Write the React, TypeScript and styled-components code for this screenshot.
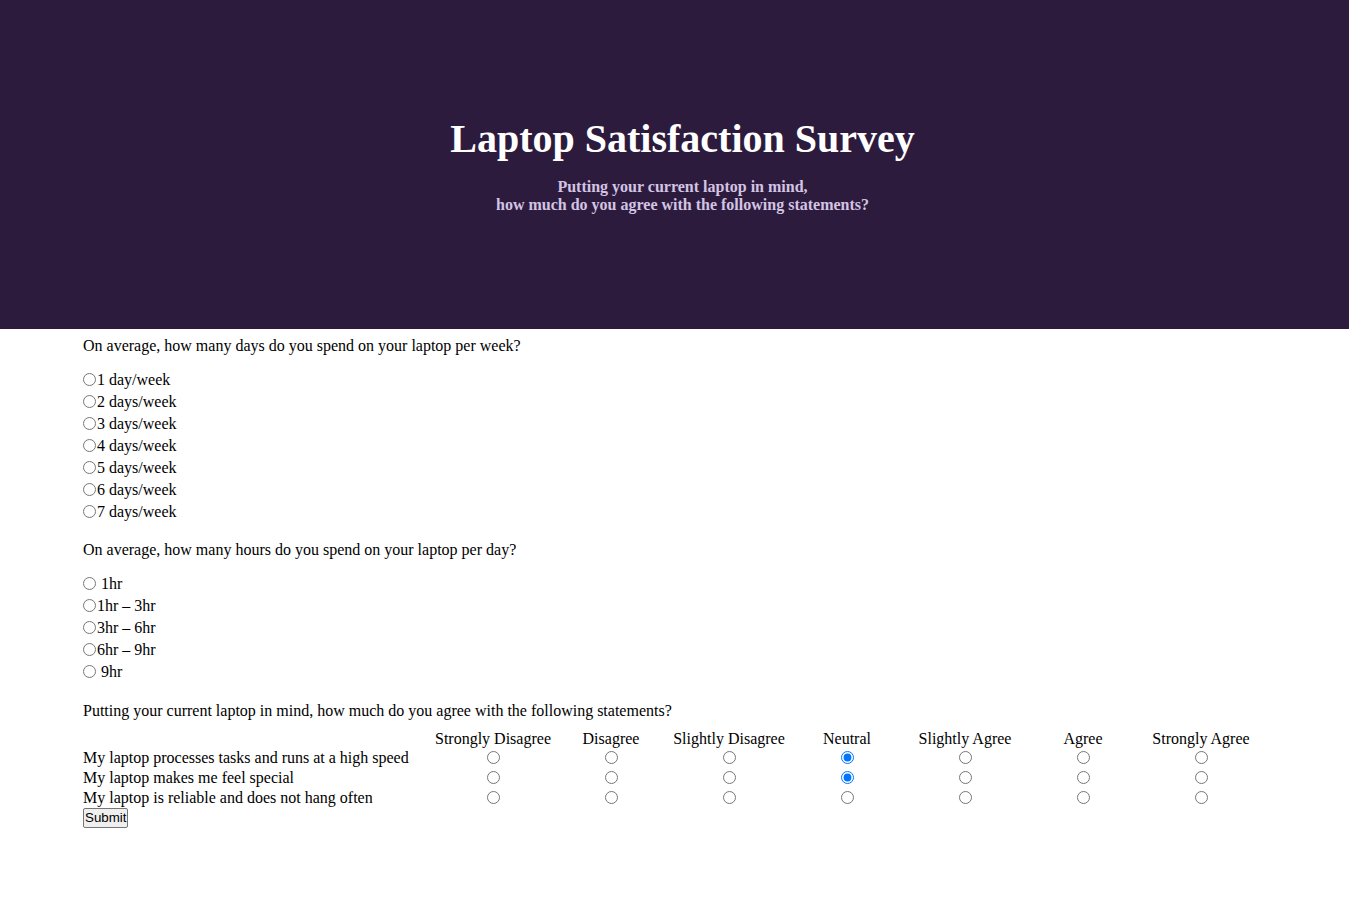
import React from "react";
import styled, { createGlobalStyle } from "styled-components";

const Global = createGlobalStyle`
  html, body { margin: 0; padding: 0; background: #ffffff; }
  body {
    font-family: "Liberation Serif", "Times New Roman", serif;
    font-size: 16px;
    color: #000;
  }
`;

const Header = styled.header`
  box-sizing: border-box;
  height: 329px;
  background: #2d1b3e;
  padding: 116px 0 0 16px;
  text-align: center;
`;

const Title = styled.h1`
  margin: 0 0 16px;
  font-size: 40px;
  font-weight: bold;
  color: #ffffff;
  line-height: 46px;
`;

const Subtitle = styled.p`
  margin: 0;
  font-size: 16px;
  font-weight: bold;
  line-height: 18px;
  color: #d3c4e3;
`;

const Main = styled.form`
  padding: 8px 83px 0;
`;

const Question = styled.p<{ $top?: number; $bottom?: number }>`
  margin: ${(p) => p.$top ?? 0}px 0 ${(p) => p.$bottom ?? 14}px;
  line-height: 18px;
`;

const Options = styled.div`
  display: flex;
  flex-direction: column;
`;

const Option = styled.label`
  display: flex;
  align-items: center;
  height: 22px;
  line-height: 18px;
  white-space: pre;
`;

const Radio = styled.input.attrs({ type: "radio" })`
  width: 13px;
  height: 13px;
  margin: -2px 1px 0 0;
`;

const Table = styled.table`
  border-collapse: separate;
  border-spacing: 0;
  table-layout: fixed;
  width: 1177px;
  margin: 0;
`;

const HeadCell = styled.th`
  font-weight: normal;
  text-align: center;
  padding: 0;
  height: 19px;
  line-height: 18px;
  white-space: nowrap;
`;

const LabelCell = styled.td`
  padding: 0;
  height: 20px;
  line-height: 18px;
  text-align: left;
  white-space: nowrap;
`;

const RadioCell = styled.td`
  padding: 0;
  height: 20px;
  vertical-align: top;
`;

const CellRadio = styled.input.attrs({ type: "radio" })`
  display: block;
  width: 13px;
  height: 13px;
  margin: 3px auto 0;
`;

const Submit = styled.button`
  display: block;
  margin-top: 0;
  font-family: "Liberation Sans", Arial, sans-serif;
  font-size: 13.333px;
  line-height: 15px;
  padding: 1px 1px 2px;
  border: 1px solid #767676;
  border-radius: 2px;
  background: #efefef;
  color: #000;
`;

const days = ["1 day/week", "2 days/week", "3 days/week", "4 days/week", "5 days/week", "6 days/week", "7 days/week"];
const hours = [" 1hr", "1hr – 3hr", "3hr – 6hr", "6hr – 9hr", " 9hr"];
const scale = ["Strongly Disagree", "Disagree", "Slightly Disagree", "Neutral", "Slightly Agree", "Agree", "Strongly Agree"];
const statements = [
  { text: "My laptop processes tasks and runs at a high speed", checked: 3 },
  { text: "My laptop makes me feel special", checked: 3 },
  { text: "My laptop is reliable and does not hang often", checked: -1 },
];

export default function App() {
  return (
    <>
      <Global />
      <Header>
        <Title>Laptop Satisfaction Survey</Title>
        <Subtitle>
          Putting your current laptop in mind,
          <br />
          how much do you agree with the following statements?
        </Subtitle>
      </Header>
      <Main onSubmit={(e) => e.preventDefault()}>
        <Question>On average, how many days do you spend on your laptop per week?</Question>
        <Options>
          {days.map((d) => (
            <Option key={d}>
              <Radio name="days" />
              {d}
            </Option>
          ))}
        </Options>
        <Question $top={18}>On average, how many hours do you spend on your laptop per day?</Question>
        <Options>
          {hours.map((h) => (
            <Option key={h}>
              <Radio name="hours" />
              {h}
            </Option>
          ))}
        </Options>
        <Question $top={19} $bottom={9}>
          Putting your current laptop in mind, how much do you agree with the following statements?
        </Question>
        <Table>
          <colgroup>
            <col style={{ width: 351 }} />
            {scale.map((s) => (
              <col key={s} style={{ width: 118 }} />
            ))}
          </colgroup>
          <thead>
            <tr>
              <HeadCell />
              {scale.map((s) => (
                <HeadCell key={s}>{s}</HeadCell>
              ))}
            </tr>
          </thead>
          <tbody>
            {statements.map((st, i) => (
              <tr key={st.text}>
                <LabelCell>{st.text}</LabelCell>
                {scale.map((s, j) => (
                  <RadioCell key={s}>
                    <CellRadio name={`st${i}`} defaultChecked={st.checked === j} />
                  </RadioCell>
                ))}
              </tr>
            ))}
          </tbody>
        </Table>
        <Submit type="submit">Submit</Submit>
      </Main>
    </>
  );
}
